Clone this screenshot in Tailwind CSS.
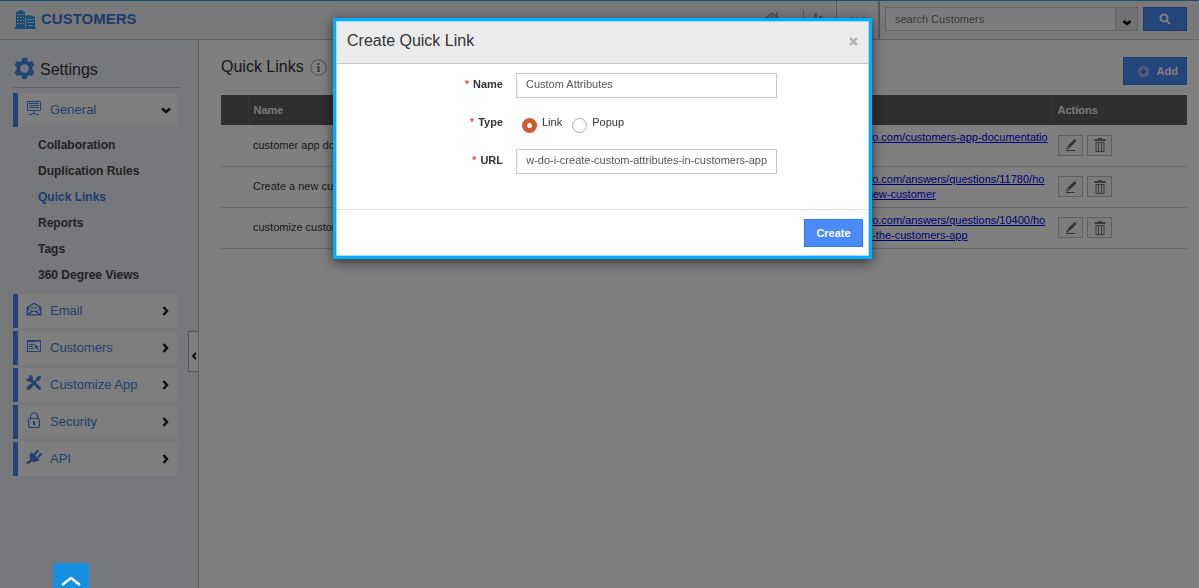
<!DOCTYPE html>
<html lang="en">

<head>
  <meta charset="UTF-8" />
  <meta name="viewport" content="width=device-width, initial-scale=1.0" />
  <title>Customers - Quick Links</title>
  <script src="https://cdn.jsdelivr.net/npm/@tailwindcss/browser@4"></script>
</head>

<body class="flex flex-col h-screen overflow-hidden bg-white text-[#333] text-[11px] font-['Liberation_Sans',Arial,sans-serif]">
  <!-- Top bar -->
  <header class="flex h-10 shrink-0 items-stretch justify-between border-t border-b border-t-[#2fa4d8] border-b-[#c8c8c8] bg-[#f2f2f2] pl-[15px] pr-3">
    <div class="flex items-center gap-[5px] pb-px">
      <svg class="w-[21px] h-[19px]" viewBox="0 0 21 19">
        <path fill="#2f9af0" d="M1 2l5-2 4 2v4l4-1 6 2v10h1v2H0v-2h1z" />
        <path stroke="#cfe3f7" stroke-width="1" stroke-dasharray="2 1" d="M2 4.500h7M2 7.500h7M2 10.500h7M2 13.500h7" />
        <path stroke="#cfe3f7" stroke-width="1" d="M10.500 8v9M12 9.500h7M12 12.500h7M13 15.500h5" />
      </svg>
      <h1 class="text-[15px] font-bold text-[#3c76dc]">CUSTOMERS</h1>
    </div>
    <div class="flex">
      <nav class="flex items-center pr-[14px]">
        <a href="#" aria-label="Home">
          <svg class="w-[18px] h-[18px]" viewBox="0 0 18 18" fill="none" stroke="#aaa" stroke-width="2">
            <path d="M1 9l8-7 8 7M14 1v5" />
            <path fill="#aaa" stroke="none" d="M3 10l6-5 6 5v7H3z" />
          </svg>
        </a>
        <span class="ml-[22px] mr-[10px] h-5 w-px bg-[#b0b0b0]"></span>
        <a href="#" aria-label="Reports">
          <svg class="w-2 h-4" viewBox="0 0 8 16" fill="#aaa">
            <path d="M0 1h3v14H0zM5 4h3v11H5z" />
          </svg>
        </a>
      </nav>
      <button aria-label="More" class="flex w-11 justify-center border-l border-r-2 border-[#b4b4b4] bg-[#f7f7f7] pt-4">
        <svg class="w-4 h-1" viewBox="0 0 16 4" fill="#bbb"><path d="M0 0h3v2H0zM6 0h3v2H6zM12 0h3v2h-3z" /></svg>
      </button>
      <form class="flex pt-[6px] pl-[5px]">
        <input type="text" aria-label="Search" placeholder="search Customers"
          class="h-6 w-[231px] border border-[#c4c4c4] bg-[#fbfbfb] px-[9px] placeholder:text-[#777]" />
        <button type="button" aria-label="Search options"
          class="flex h-6 w-[22px] items-center justify-center border border-l-0 border-[#c4c4c4] bg-[#e2e2e2] pt-2">
          <svg class="w-2 h-[6px]" viewBox="0 0 8 6" fill="none" stroke="#111" stroke-width="2.500"><path d="M0.500 1L4 4 7.500 1" /></svg>
        </button>
        <button type="button" aria-label="Search"
          class="ml-[5px] flex h-6 w-11 items-center justify-center border border-[#3079ed] bg-[#4a8cf7]">
          <svg class="w-3 h-3" viewBox="0 0 12 12" fill="none" stroke="#fff" stroke-width="2">
            <circle cx="5" cy="5" r="3.500" /><path d="M7.500 7.500L11 11" />
          </svg>
        </button>
      </form>
    </div>
  </header>

  <div class="flex flex-1 min-h-0">
    <!-- Sidebar -->
    <aside class="relative w-[199px] shrink-0 border-r border-[#c0c0c0] bg-[#eef0f7] pl-[13px] pt-3">
      <div class="mb-[5px] flex h-9 w-[167px] items-center gap-[5px] border-b border-[#c6c6ca] pl-px">
        <svg class="mb-[3px] w-[21px] h-[21px]" viewBox="0 0 24 24" fill="#4189ec" fill-rule="evenodd">
          <path d="M9.500 0h5l.8 3.300 2.200 1.200L20.700 3.500l2.600 4.300L21 10.500v3l2.300 2.700-2.600 4.300-3.200-1-2.200 1.200-.8 3.300h-5l-.8-3.300-2.200-1.200-3.200 1L.7 16.200 3 13.500v-3L.7 7.800l2.600-4.300 3.200 1 2.200-1.200zM12 7a5 5 0 100 10 5 5 0 000-10z" />
        </svg>
        <h2 class="text-[16px]">Settings</h2>
      </div>

      <nav class="flex w-[164px] flex-col gap-[3px] text-[13px] text-[#4a80e0]">
        <a href="#" class="flex h-[34px] items-center border-l-[5px] border-[#4a86ee] bg-[#fcfcfc] pl-2 pr-[6px]">
          <svg class="mr-2 mb-1 w-4 h-4" viewBox="0 0 16 16" fill="none" stroke="#4a80e0">
            <path d="M1.500 1.500h13v9h-13zM3 3.500h10M3 5.500h10M3 7.500h10M8 11v3M3 14.500h3.500M9.500 14.500H13M6.500 13.500h3" />
          </svg>
          <span class="flex-1">General</span>
          <svg class="w-[10px] h-[7px]" viewBox="0 0 10 7" fill="none" stroke="#222" stroke-width="2.500"><path d="M1 1.500l4 3.500 4-3.500" /></svg>
        </a>
        <ul class="flex flex-col pt-[2px] pb-[3px] pl-[25px] text-[12px] font-bold leading-[26px] text-[#444]">
          <li><a href="#">Collaboration</a></li>
          <li><a href="#">Duplication Rules</a></li>
          <li><a href="#" class="text-[#3c78d8]">Quick Links</a></li>
          <li><a href="#">Reports</a></li>
          <li><a href="#">Tags</a></li>
          <li><a href="#">360 Degree Views</a></li>
        </ul>
        <a href="#" class="flex h-[34px] items-center border-l-[5px] border-[#4a86ee] bg-[#fcfcfc] pl-2 pr-2">
          <svg class="mr-2 mb-1 w-4 h-4" viewBox="0 0 16 16" fill="#4a80e0" fill-rule="evenodd">
            <path d="M8 1.500L15.500 6v8.500H.5V6zM8 3L3 6.200V9l5 1 5-1V6.200zM2 8.500v4l3-2zM14 8.500v4l-3-2zM3.500 13.200h9L9.500 11h-3z" />
            <path d="M4.500 6.500h7v1h-7z" />
          </svg>
          <span class="flex-1">Email</span>
          <svg class="w-[7px] h-[10px]" viewBox="0 0 7 10" fill="none" stroke="#222" stroke-width="2.500"><path d="M1.500 1L5 5 1.500 9" /></svg>
        </a>
        <a href="#" class="flex h-[34px] items-center border-l-[5px] border-[#4a86ee] bg-[#fcfcfc] pl-2 pr-2">
          <svg class="mr-2 mb-1 w-4 h-4" viewBox="0 0 16 16" fill="none" stroke="#4a80e0">
            <path d="M1.500 2.500h13v11h-13zM3 6.500h5M3 8.500h4M3 10.500h5" />
            <path stroke-width="2" stroke-dasharray="9 1 1 1 3" d="M1 3h14" />
            <path fill="#4a80e0" stroke="none" d="M8.500 6.500l4 2-1.300.7 2 2.300-1 .8-2-2.300-.9 1.200z" />
          </svg>
          <span class="flex-1">Customers</span>
          <svg class="w-[7px] h-[10px]" viewBox="0 0 7 10" fill="none" stroke="#222" stroke-width="2.500"><path d="M1.500 1L5 5 1.500 9" /></svg>
        </a>
        <a href="#" class="flex h-[34px] items-center border-l-[5px] border-[#4a86ee] bg-[#fcfcfc] pl-2 pr-2">
          <svg class="mr-2 mb-1 w-4 h-4" viewBox="0 0 16 16" fill="none" stroke="#4a80e0" stroke-linecap="round">
            <path stroke-width="3" d="M4.500 4.500l9 9" />
            <path stroke-width="2.400" d="M4.500 1.300A3 3 0 011.500 4.800M1.500 4.800c1.500 1.500 4.500.5 4.500-2" />
            <path stroke-width="3.600" d="M2.500 13.300L5.500 10.300" />
            <path stroke-width="2" d="M6 9.800l5-5" />
            <path stroke-width="3.400" d="M11.300 4.500l2-2" />
          </svg>
          <span class="flex-1">Customize App</span>
          <svg class="w-[7px] h-[10px]" viewBox="0 0 7 10" fill="none" stroke="#222" stroke-width="2.500"><path d="M1.500 1L5 5 1.500 9" /></svg>
        </a>
        <a href="#" class="flex h-[34px] items-center border-l-[5px] border-[#4a86ee] bg-[#fcfcfc] pl-2 pr-2">
          <svg class="mr-2 mb-1 w-4 h-4" viewBox="0 0 16 16" fill="none" stroke="#4a80e0" stroke-width="1.200">
            <path d="M4.500 7V4a3.500 3 0 017 0v3" />
            <rect x="2.500" y="6.500" width="11" height="9" rx="2" />
            <path stroke-width="2" d="M8 9v4" />
          </svg>
          <span class="flex-1">Security</span>
          <svg class="w-[7px] h-[10px]" viewBox="0 0 7 10" fill="none" stroke="#222" stroke-width="2.500"><path d="M1.500 1L5 5 1.500 9" /></svg>
        </a>
        <a href="#" class="flex h-[34px] items-center border-l-[5px] border-[#4a86ee] bg-[#fcfcfc] pl-2 pr-2">
          <svg class="mr-2 mb-1 w-4 h-4" viewBox="0 0 16 16" fill="#4a80e0" stroke="#4a80e0" stroke-linecap="round">
            <path stroke="none" d="M5.500 3l8 7.500c-2 2.500-5.500 3.300-8 1.500C3 10 3 5.500 5.500 3z" />
            <path stroke-width="2" d="M9 5l2.500-3M12.500 8L15 5" />
            <path fill="none" stroke-width="2.400" d="M5.500 11C4 11.500 4 13.500 1.500 13.700" />
          </svg>
          <span class="flex-1">API</span>
          <svg class="w-[7px] h-[10px]" viewBox="0 0 7 10" fill="none" stroke="#222" stroke-width="2.500"><path d="M1.500 1L5 5 1.500 9" /></svg>
        </a>
      </nav>

      <!-- Collapse handle, sits on the sidebar edge -->
      <button aria-label="Collapse sidebar"
        class="absolute right-0 top-[291px] flex h-[41px] w-[10px] items-center justify-center border border-r-0 border-[#b0b0b0] bg-[#fcfcfc] pt-2">
        <svg class="w-[6px] h-2" viewBox="0 0 6 8" fill="none" stroke="#222" stroke-width="2"><path d="M5 1L2 4l3 3" /></svg>
      </button>
    </aside>

    <!-- Quick links -->
    <main class="flex-1 min-w-0 pl-[22px] pr-3 pt-[17px]">
      <div class="mb-[10px] flex items-start justify-between">
        <div class="flex items-center gap-[6px] pt-px">
          <h2 class="text-[16px] leading-[18px]">Quick Links</h2>
          <svg class="w-[17px] h-[17px]" viewBox="0 0 17 17" fill="none" stroke="#999">
            <circle cx="8.500" cy="8.500" r="7.700" />
            <path stroke="#777" stroke-width="2" d="M8.500 4v2M8.500 7v5" />
            <path stroke="#777" d="M7 7.500h1.500M7 12.500h3" />
          </svg>
        </div>
        <button class="flex h-7 w-16 items-center justify-end gap-2 border border-[#3079ed] bg-[#4a8cf7] pr-2 font-bold text-white">
          <svg class="w-[11px] h-[11px]" viewBox="0 0 11 11">
            <circle cx="5.500" cy="5.500" r="5.500" fill="#a9c0ee" /><path stroke="#3a78e8" stroke-width="2" d="M5.500 2.500v6M2.500 5.500h6" />
          </svg>
          Add
        </button>
      </div>

      <table class="w-full table-fixed border-collapse text-left">
        <thead class="bg-[#5e5e5e] text-[#f0f0f0]">
          <tr class="h-[30px]">
            <th class="w-[27px] border-r border-[#6c6c6c]"></th>
            <th class="pl-[5px]">Name</th>
            <th class="w-[272px] border-r border-[#6c6c6c] pl-2">URL</th>
            <th class="w-[135px] pl-[5px]">Actions</th>
          </tr>
        </thead>
        <tbody class="leading-[15px]">
          <tr class="h-[41px] border-b border-[#d4d4d4]">
            <td></td>
            <td class="pl-[5px]">customer app documentation</td>
            <td class="whitespace-nowrap pl-[9px]"><a href="#" class="text-[#0000ee] underline">http://www.apptivo.com/customers-app-documentatio<br>n</a></td>
            <td class="pl-[6px]">
              <div class="flex gap-1">
                <button aria-label="Edit" class="flex h-[21px] w-[25px] items-center justify-center border border-[#c0c0c0] bg-[#f8f8f8]">
                  <svg class="w-3 h-[14px]" viewBox="0 0 12 14" fill="#666"><path d="M9.500 1l2 2-7 7-2-2zM2 8.500L4 10.500 1 11.500zM1 12h9v1H1z" /></svg>
                </button>
                <button aria-label="Delete" class="flex h-[21px] w-[25px] items-center justify-center border border-[#c0c0c0] bg-[#f8f8f8]">
                  <svg class="w-3 h-[14px]" viewBox="0 0 12 14" fill="none" stroke="#777"><path stroke-width="2" d="M.5 2h11M4 1h4" /><path d="M1.500 4.500h9M2 5v8.500h8V5M4.500 5v8M7.500 5v8" /></svg>
                </button>
              </div>
            </td>
          </tr>
          <tr class="h-[41px] border-b border-[#d4d4d4]">
            <td></td>
            <td class="pl-[5px]">Create a new customer</td>
            <td class="whitespace-nowrap pl-[9px]"><a href="#" class="text-[#0000ee] underline">http://www.apptivo.com/answers/questions/11780/ho<br>w-do-i-create-a-new-customer</a></td>
            <td class="pl-[6px]">
              <div class="flex gap-1">
                <button aria-label="Edit" class="flex h-[21px] w-[25px] items-center justify-center border border-[#c0c0c0] bg-[#f8f8f8]">
                  <svg class="w-3 h-[14px]" viewBox="0 0 12 14" fill="#666"><path d="M9.500 1l2 2-7 7-2-2zM2 8.500L4 10.500 1 11.500zM1 12h9v1H1z" /></svg>
                </button>
                <button aria-label="Delete" class="flex h-[21px] w-[25px] items-center justify-center border border-[#c0c0c0] bg-[#f8f8f8]">
                  <svg class="w-3 h-[14px]" viewBox="0 0 12 14" fill="none" stroke="#777"><path stroke-width="2" d="M.5 2h11M4 1h4" /><path d="M1.500 4.500h9M2 5v8.500h8V5M4.500 5v8M7.500 5v8" /></svg>
                </button>
              </div>
            </td>
          </tr>
          <tr class="h-[41px] border-b border-[#d4d4d4]">
            <td></td>
            <td class="pl-[5px]">customize customers app</td>
            <td class="whitespace-nowrap pl-[9px]"><a href="#" class="text-[#0000ee] underline">http://www.apptivo.com/answers/questions/10400/ho<br>w-do-i-customize-the-customers-app</a></td>
            <td class="pl-[6px]">
              <div class="flex gap-1">
                <button aria-label="Edit" class="flex h-[21px] w-[25px] items-center justify-center border border-[#c0c0c0] bg-[#f8f8f8]">
                  <svg class="w-3 h-[14px]" viewBox="0 0 12 14" fill="#666"><path d="M9.500 1l2 2-7 7-2-2zM2 8.500L4 10.500 1 11.500zM1 12h9v1H1z" /></svg>
                </button>
                <button aria-label="Delete" class="flex h-[21px] w-[25px] items-center justify-center border border-[#c0c0c0] bg-[#f8f8f8]">
                  <svg class="w-3 h-[14px]" viewBox="0 0 12 14" fill="none" stroke="#777"><path stroke-width="2" d="M.5 2h11M4 1h4" /><path d="M1.500 4.500h9M2 5v8.500h8V5M4.500 5v8M7.500 5v8" /></svg>
                </button>
              </div>
            </td>
          </tr>
        </tbody>
      </table>
    </main>
  </div>

  <!-- Modal: Create Quick Link -->
  <div class="fixed inset-0 flex items-start justify-center bg-black/50 pl-[6px] pt-[18px]">
    <form role="dialog" aria-labelledby="modalTitle"
      class="w-[539px] border-[3px] border-[#00b0ff] bg-white shadow-[0_3px_12px_rgba(0,0,0,0.6)]">
      <div class="border border-[#9fdcfa]">
        <div class="flex h-[42px] items-center justify-between border-b border-[#c8c8c8] bg-[#ebebeb] pl-[10px] pr-[10px] pb-[3px]">
          <h3 id="modalTitle" class="text-[16px]">Create Quick Link</h3>
          <button type="button" aria-label="Close">
            <svg class="w-[9px] h-[9px]" viewBox="0 0 9 9" stroke="#b4b4b4" stroke-width="2.500"><path d="M1 1l7 7M8 1L1 8" /></svg>
          </button>
        </div>
        <div class="flex flex-col gap-[13px] pt-[9px] pb-[35px]">
          <div class="flex h-[25px] items-center gap-[13px]">
            <label for="name" class="w-[166px] pb-[2px] text-right font-bold"><span class="mr-1 font-normal text-[#ff0000]">*</span>Name</label>
            <input id="name" type="text" value="Custom Attributes" class="h-[25px] w-[261px] border border-[#c8c8c8] px-[9px] pb-[3px] text-[#555]" />
          </div>
          <div class="flex h-[25px] items-center gap-[13px]">
            <span id="typeLabel" class="w-[166px] pb-[2px] text-right font-bold"><span class="mr-1 font-normal text-[#ff0000]">*</span>Type</span>
            <div role="radiogroup" aria-labelledby="typeLabel" class="flex items-center gap-[10px] pb-[2px] pl-[6px]">
              <label class="flex items-center gap-[5px]">
                <input type="radio" name="type" checked class="mt-[5px] size-[15px] appearance-none rounded-full border border-[#aaa] bg-white checked:border-[5px] checked:border-[#d05c33]" />Link
              </label>
              <label class="flex items-center gap-[5px]">
                <input type="radio" name="type" class="mt-[5px] size-[15px] appearance-none rounded-full border border-[#aaa] bg-white checked:border-[5px] checked:border-[#d05c33]" />Popup
              </label>
            </div>
          </div>
          <div class="flex h-[25px] items-center gap-[13px]">
            <label for="url" class="w-[166px] pb-[2px] text-right font-bold"><span class="mr-1 font-normal text-[#ff0000]">*</span>URL</label>
            <input id="url" type="text" value="how-do-i-create-custom-attributes-in-customers-app" class="h-[25px] w-[261px] border border-[#c8c8c8] px-[9px] pb-[3px] text-[#555]" />
          </div>
        </div>
        <div class="flex justify-end border-t border-[#e2e2e2] pt-[9px] pb-2 pr-[5px]">
          <button type="button" class="h-7 w-[59px] border border-[#3079ed] bg-[#4a8cf7] font-bold text-white">Create</button>
        </div>
      </div>
    </form>
  </div>

  <!-- Back to top -->
  <button aria-label="Back to top" class="fixed bottom-0 left-[53px] flex h-[25px] w-9 items-center justify-center rounded-t bg-[#148fe2] pt-[10px]">
    <svg class="w-5 h-[10px]" viewBox="0 0 20 10" fill="none" stroke="#fff" stroke-width="2.500"><path d="M1 9l9-7 9 7" /></svg>
  </button>

  <script>
    // keep the end of a long URL in view
    const url = document.getElementById('url');
    url.scrollLeft = url.scrollWidth;
  </script>
</body>

</html>
